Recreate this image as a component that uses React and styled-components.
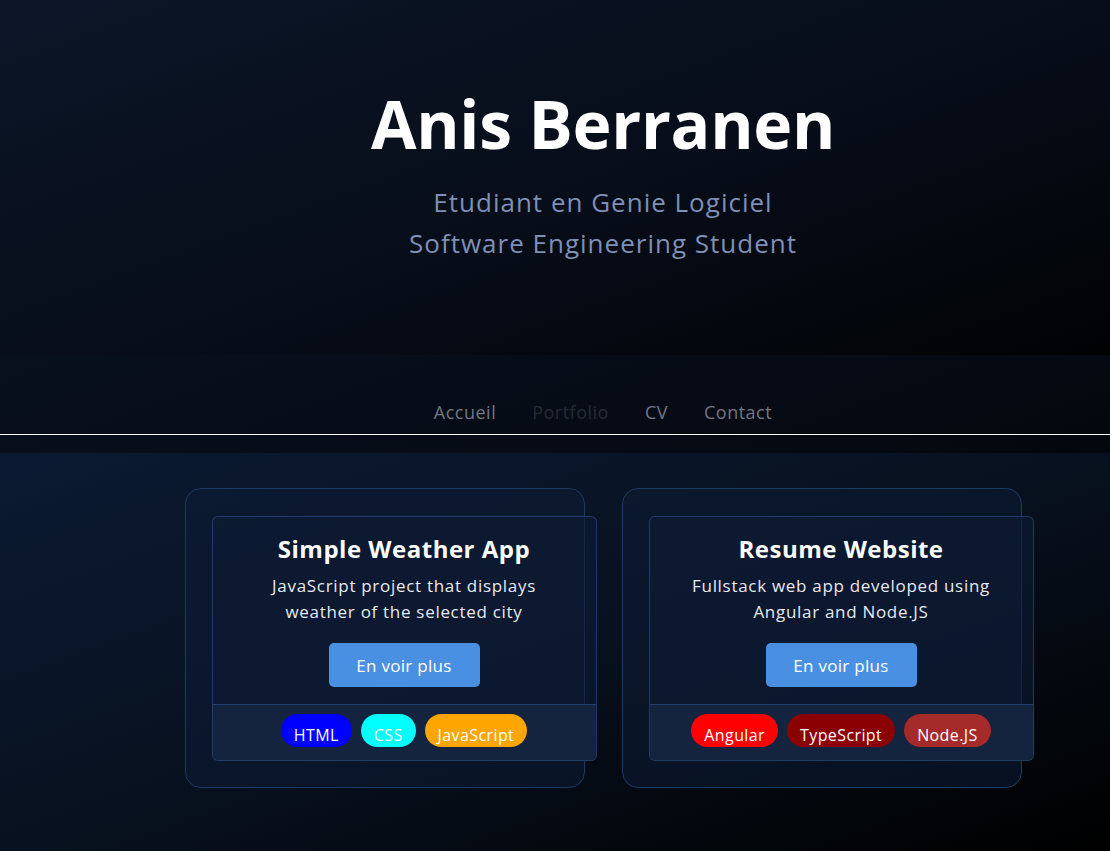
import React from "react";
import styled, { createGlobalStyle } from "styled-components";

const GlobalStyle = createGlobalStyle`
  * { box-sizing: border-box; }
  body {
    margin: 0;
    background: #04070d;
    font-family: "Open Sans", "Noto Sans", sans-serif;
    color: #fff;
  }
`;

const projects = [
  {
    title: "Simple Weather App",
    desc: ["JavaScript project that displays", "weather of the selected city"],
    tags: [
      { label: "HTML", color: "#0000ff" },
      { label: "CSS", color: "#00ffff" },
      { label: "JavaScript", color: "#ffa500" },
    ],
  },
  {
    title: "Resume Website",
    desc: ["Fullstack web app developed using", "Angular and Node.JS"],
    tags: [
      { label: "Angular", color: "#ff0000" },
      { label: "TypeScript", color: "#8b0000" },
      { label: "Node.JS", color: "#a52a2a" },
    ],
  },
];

export default function App() {
  return (
    <>
      <GlobalStyle />
      <Hero>
        <Name>Anis Berranen</Name>
        <Tagline>
          Etudiant en Genie Logiciel
          <br />
          Software Engineering Student
        </Tagline>
      </Hero>
      <NavBand>
        <NavBar>
          <NavLink href="#">Accueil</NavLink>
          <NavLink href="#" active>Portfolio</NavLink>
          <NavLink href="#">CV</NavLink>
          <NavLink href="#">Contact</NavLink>
        </NavBar>
      </NavBand>
      <Portfolio>
        <CardRow>
          {projects.map((p) => (
            <Card key={p.title}>
              <Panel>
                <PanelBody>
                  <CardTitle>{p.title}</CardTitle>
                  <CardText>
                    {p.desc[0]}
                    <br />
                    {p.desc[1]}
                  </CardText>
                  <MoreButton>En voir plus</MoreButton>
                </PanelBody>
                <PanelFooter>
                  {p.tags.map((t) => (
                    <Tag key={t.label} bg={t.color}>{t.label}</Tag>
                  ))}
                </PanelFooter>
              </Panel>
            </Card>
          ))}
        </CardRow>
      </Portfolio>
    </>
  );
}

const Hero = styled.header`
  height: 355px;
  padding: 82px 0 0 96px;
  text-align: center;
  background: linear-gradient(160deg, #0c1628 0%, #070d19 55%, #010204 100%);
`;

const Name = styled.h1`
  margin: 0;
  font-size: 66px;
  font-weight: 700;
  line-height: 82px;
  letter-spacing: -0.3px;
  color: #ffffff;
`;

const Tagline = styled.p`
  margin: 18px 0 0;
  font-size: 26px;
  line-height: 41px;
  letter-spacing: 1px;
  color: #7f8fb5;
`;

const NavBand = styled.div`
  height: 98px;
  padding-top: 45px;
  background: linear-gradient(160deg, #08101d 0%, #060b15 60%, #04070d 100%);
`;

const NavBar = styled.nav`
  display: flex;
  justify-content: center;
  gap: 36px;
  padding: 0 0 10px 96px;
  border-bottom: 1px solid #ffffff;
`;

const NavLink = styled.a`
  font-size: 18px;
  line-height: 24px;
  letter-spacing: 0.5px;
  text-decoration: none;
  color: ${({ active }) => (active ? "#252b35" : "#6f7785")};
`;

const Portfolio = styled.section`
  min-height: 398px;
  padding: 35px 0 40px 96px;
  background: linear-gradient(160deg, #0b1a33 0%, #08111f 50%, #000000 100%);
`;

const CardRow = styled.div`
  display: flex;
  justify-content: center;
  gap: 37px;
`;

const Card = styled.article`
  width: 400px;
  height: 300px;
  padding: 27px 0 0 26px;
  border: 1px solid #1d3a64;
  border-radius: 16px;
  background: rgba(13, 27, 52, 0.55);
`;

const Panel = styled.div`
  width: 385px;
  border: 1px solid rgba(40, 72, 120, 0.75);
  border-radius: 6px;
  background: rgba(14, 27, 52, 0.6);
  overflow: hidden;
`;

const PanelBody = styled.div`
  display: flex;
  flex-direction: column;
  align-items: center;
  padding: 17px 6px 17px;
  text-align: center;
`;

const CardTitle = styled.h2`
  margin: 0;
  font-size: 24px;
  font-weight: 700;
  line-height: 30px;
  letter-spacing: 0.5px;
  color: #ffffff;
`;

const CardText = styled.p`
  margin: 9px 0 0;
  font-size: 17px;
  line-height: 26px;
  letter-spacing: 0.7px;
  color: #e6e9f0;
`;

const MoreButton = styled.button`
  margin-top: 18px;
  width: 151px;
  height: 44px;
  border: none;
  border-radius: 5px;
  background: #4a90e2;
  color: #ffffff;
  font-family: inherit;
  font-size: 17px;
  letter-spacing: 0.3px;
  cursor: pointer;
`;

const PanelFooter = styled.div`
  display: flex;
  justify-content: center;
  gap: 9px;
  height: 56px;
  padding-top: 9px;
  border-top: 1px solid rgba(40, 72, 120, 0.75);
  background: #14243f;
`;

const Tag = styled.span`
  height: 33px;
  padding: 9px 13px 0;
  border-radius: 17px;
  background: ${({ bg }) => bg};
  color: #ffffff;
  font-size: 16px;
  line-height: 24px;
  letter-spacing: 0.4px;
`;
